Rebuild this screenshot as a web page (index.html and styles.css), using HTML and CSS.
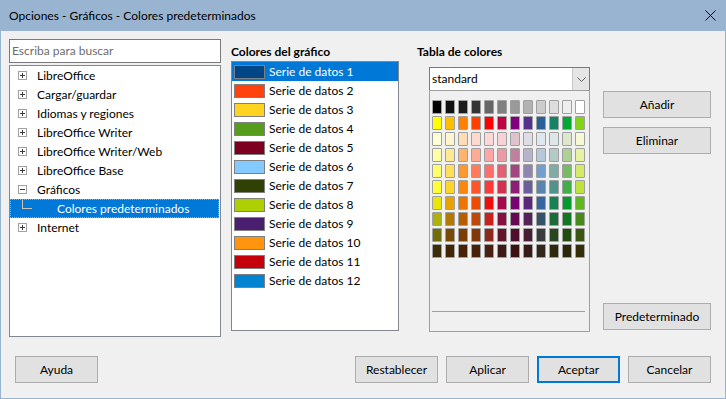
FILE: index.html
```html
<!DOCTYPE html>
<html>
	<head>
		<meta charset="UTF-8">
		<title>Opciones - Gráficos - Colores predeterminados</title>
		<link rel="stylesheet" href="styles.css">
	</head>
	<body>
		<div class="window">
			<div class="titlebar">
				<span class="title">Opciones - Gráficos - Colores predeterminados</span>
				<svg class="close" width="11" height="11" viewBox="0 0 11 11">
					<path d="M0.5 0.5 L10.5 10.5 M10.5 0.5 L0.5 10.5" stroke="#000" stroke-width="1" fill="none"/>
				</svg>
			</div>

			<div class="main">
				<!--左侧：搜索和树-->
				<div class="nav">
					<div class="search">Escriba para buscar</div>
					<ul class="tree">
						<li><span class="exp plus"></span>LibreOffice</li>
						<li><span class="exp plus"></span>Cargar/guardar</li>
						<li><span class="exp plus"></span>Idiomas y regiones</li>
						<li><span class="exp plus"></span>LibreOffice Writer</li>
						<li><span class="exp plus"></span>LibreOffice Writer/Web</li>
						<li><span class="exp plus"></span>LibreOffice Base</li>
						<li><span class="exp"></span>Gráficos</li>
						<li class="sel"><span class="branch"></span>Colores predeterminados</li>
						<li><span class="exp plus"></span>Internet</li>
					</ul>
				</div>

				<!--图表颜色-->
				<div class="series-col">
					<div class="label">Colores del gráfico</div>
					<ul class="series">
						<li class="sel"><span class="sw" style="background:#004586"></span>Serie de datos 1</li>
						<li><span class="sw" style="background:#ff420e"></span>Serie de datos 2</li>
						<li><span class="sw" style="background:#ffd320"></span>Serie de datos 3</li>
						<li><span class="sw" style="background:#579d1c"></span>Serie de datos 4</li>
						<li><span class="sw" style="background:#7e0021"></span>Serie de datos 5</li>
						<li><span class="sw" style="background:#83caff"></span>Serie de datos 6</li>
						<li><span class="sw" style="background:#314004"></span>Serie de datos 7</li>
						<li><span class="sw" style="background:#aecf00"></span>Serie de datos 8</li>
						<li><span class="sw" style="background:#4b1f6f"></span>Serie de datos 9</li>
						<li><span class="sw" style="background:#ff950e"></span>Serie de datos 10</li>
						<li><span class="sw" style="background:#c5000b"></span>Serie de datos 11</li>
						<li><span class="sw" style="background:#0084d1"></span>Serie de datos 12</li>
					</ul>
				</div>

				<!--颜色表-->
				<div class="table-col">
					<div class="label">Tabla de colores</div>
					<div class="combo">
						<span class="combo-text">standard</span>
						<span class="combo-btn">
							<svg width="9" height="5" viewBox="0 0 9 5">
								<path d="M0.5 0.5 L4.5 4.5 L8.5 0.5" stroke="#606060" stroke-width="1" fill="none"/>
							</svg>
						</span>
					</div>
					<div class="palette">
						<div class="swatches" id="swatches"></div>
						<div class="sep"></div>
					</div>
				</div>

				<div class="btn-col">
					<button>Añadir</button>
					<button class="second">Eliminar</button>
					<button class="bottom">Predeterminado</button>
				</div>
			</div>

			<div class="footer">
				<button>Ayuda</button>
				<div class="right">
					<button>Restablecer</button>
					<button>Aplicar</button>
					<button class="default">Aceptar</button>
					<button>Cancelar</button>
				</div>
			</div>
		</div>

		<script type="text/javascript">
			//standard 调色板，每行12个
			var colors = [
				'000000','111111','1c1c1c','333333','666666','808080','999999','b2b2b2','cccccc','dddddd','eeeeee','ffffff',
				'ffff00','ffbf00','ff8000','ff4000','ff0000','bf0041','800080','55308d','2a6099','158466','00a933','81d41a',
				'ffffd7','fff5ce','ffdbb6','ffd8ce','ffd7d7','f7d1d5','e0c2cd','dedce6','dee6ef','dee7e5','dde8cb','f6f9d4',
				'ffffa6','ffe994','ffb66c','ffaa95','ffa6a6','ec9ba4','bf819e','b7b3ca','b4c7dc','b3cac7','afd095','e8f2a1',
				'ffff6d','ffde59','ff972f','ff7b59','ff6d6d','e16173','a1467e','8e86ae','729fcf','81aca6','77bc65','d4ea6b',
				'ffff38','ffd428','ff860d','ff5429','ff3838','d62e4e','8d1d75','6b5e9b','5983b0','50938a','3faf46','bde33c',
				'e6e60a','e8a202','ea7500','ed4c05','f10d0c','a7074b','780373','5b277d','3465a4','168253','069a2e','5eb91e',
				'acb20c','b47804','b85c00','be480a','c9211e','861141','650953','55215b','355269','1e6a39','127622','468a1a',
				'706e0c','784b04','7b3d00','813709','8d281e','611729','4e102d','481d32','383d3c','28471f','224b12','395511',
				'3b2d08','442503','472101','46200a','4a1e10','3e1a14','3b1412','3a1a17','33261a','2c2a0a','2a2808','332e06'
			];
			var box = document.getElementById('swatches');
			for(var i = 0; i < colors.length; i++){
				var cell = document.createElement('div');
				cell.style.background = '#' + colors[i];
				box.appendChild(cell);
			}
		</script>
	</body>
</html>
```

FILE: styles.css
```css
*{
	margin: 0;
	padding: 0;
	box-sizing: border-box;
}
ul,li{
	list-style: none;
}

body{
	font-family: Lato, "Noto Sans", sans-serif;
	font-size: 12px;
	color: #000;
	background: #f0f0f0;
}

.window{
	width: 726px;
	height: 399px;
	background: #f0f0f0;
	border: 1px solid #99b4d1;
	border-top: none;
}

.titlebar{
	height: 31px;
	background: #99b4d1;
	display: flex;
	align-items: center;
	justify-content: space-between;
	padding: 0 9px 0 8px;
}
.title{
	font-size: 12px;
}

.main{
	display: flex;
	align-items: flex-start;
	padding: 8px 0 0 8px;
}

/*左侧*/
.nav{
	width: 212px;
}
.search{
	height: 24px;
	border: 1px solid #7a7a7a;
	background: #fff;
	color: #6d6d6d;
	padding-left: 2px;
	line-height: 22px;
}
.tree{
	margin-top: 2px;
	height: 272px;
	border: 1px solid #828790;
	background: #fff;
}
.tree li{
	height: 19px;
	display: flex;
	align-items: center;
	padding-left: 8px;
}
.exp{
	position: relative;
	width: 9px;
	height: 9px;
	border: 1px solid #a0a0a0;
	margin-right: 10px;
}
.exp:before{
	content: '';
	position: absolute;
	left: 1px;
	top: 3px;
	width: 5px;
	height: 1px;
	background: #3c3c3c;
}
.exp.plus:after{
	content: '';
	position: absolute;
	left: 3px;
	top: 1px;
	width: 1px;
	height: 5px;
	background: #3c3c3c;
}
.tree li.sel{
	background: #0078d7;
	color: #fff;
	border: 1px dotted #d9a441;
	padding-left: 11px;
	margin-right: 1px;
	align-items: flex-start;
}
.branch{
	width: 10px;
	height: 9px;
	border-left: 1px solid #cfc2ae;
	border-bottom: 1px solid #cfc2ae;
	margin-right: 25px;
}
.tree li.sel{
	line-height: 17px;
}

/*标签*/
.label{
	height: 22px;
	padding-top: 5px;
	line-height: 16px;
	font-weight: bold;
}

/*系列颜色*/
.series-col{
	width: 168px;
	margin-left: 10px;
}
.series{
	height: 270px;
	border: 1px solid #828790;
	background: #fff;
}
.series li{
	height: 19px;
	display: flex;
	align-items: center;
	padding-left: 2px;
}
.series li.sel{
	background: #0078d7;
	color: #fff;
}
.sw{
	width: 31px;
	height: 14px;
	border: 1px solid #808080;
	margin-right: 4px;
}

/*颜色表*/
.table-col{
	width: 173px;
	margin-left: 18px;
}
.combo{
	display: flex;
	width: 161px;
	height: 24px;
	margin: 6px 0 0 12px;
	border: 1px solid #7a7a7a;
	background: #fff;
}
.combo-text{
	flex: 1;
	padding-left: 2px;
	line-height: 22px;
}
.combo-btn{
	width: 17px;
	display: flex;
	align-items: center;
	justify-content: center;
	background: #e5e5e5;
	border-left: 1px solid #c8c8c8;
}
.palette{
	width: 161px;
	height: 242px;
	margin: -1px 0 0 12px;
	border: 1px solid #a0a0a0;
	padding: 9px 0 0 2px;
}
.swatches{
	display: grid;
	grid-template-columns: repeat(12, 10px);
	column-gap: 3px;
	row-gap: 2px;
}
.swatches div{
	height: 14px;
	border: 1px solid #a0a0a0;
	border-radius: 1px;
}
.sep{
	width: 153px;
	height: 1px;
	margin-top: 53px;
	background: #a0a0a0;
}

/*按钮*/
button{
	width: 83px;
	height: 27px;
	background: #e1e1e1;
	border: 1px solid #adadad;
	font: inherit;
	color: #000;
}
button.default{
	border: 2px solid #0078d7;
}
.btn-col{
	width: 108px;
	height: 291px;
	margin-left: 13px;
	padding-top: 52px;
	display: flex;
	flex-direction: column;
}
.btn-col button{
	width: 108px;
}
.btn-col .second{
	margin-top: 9px;
}
.btn-col .bottom{
	margin-top: auto;
}

.footer{
	display: flex;
	margin-top: 19px;
	padding: 0 14px;
}
.footer .right{
	margin-left: auto;
	display: flex;
	gap: 8px;
}
```
